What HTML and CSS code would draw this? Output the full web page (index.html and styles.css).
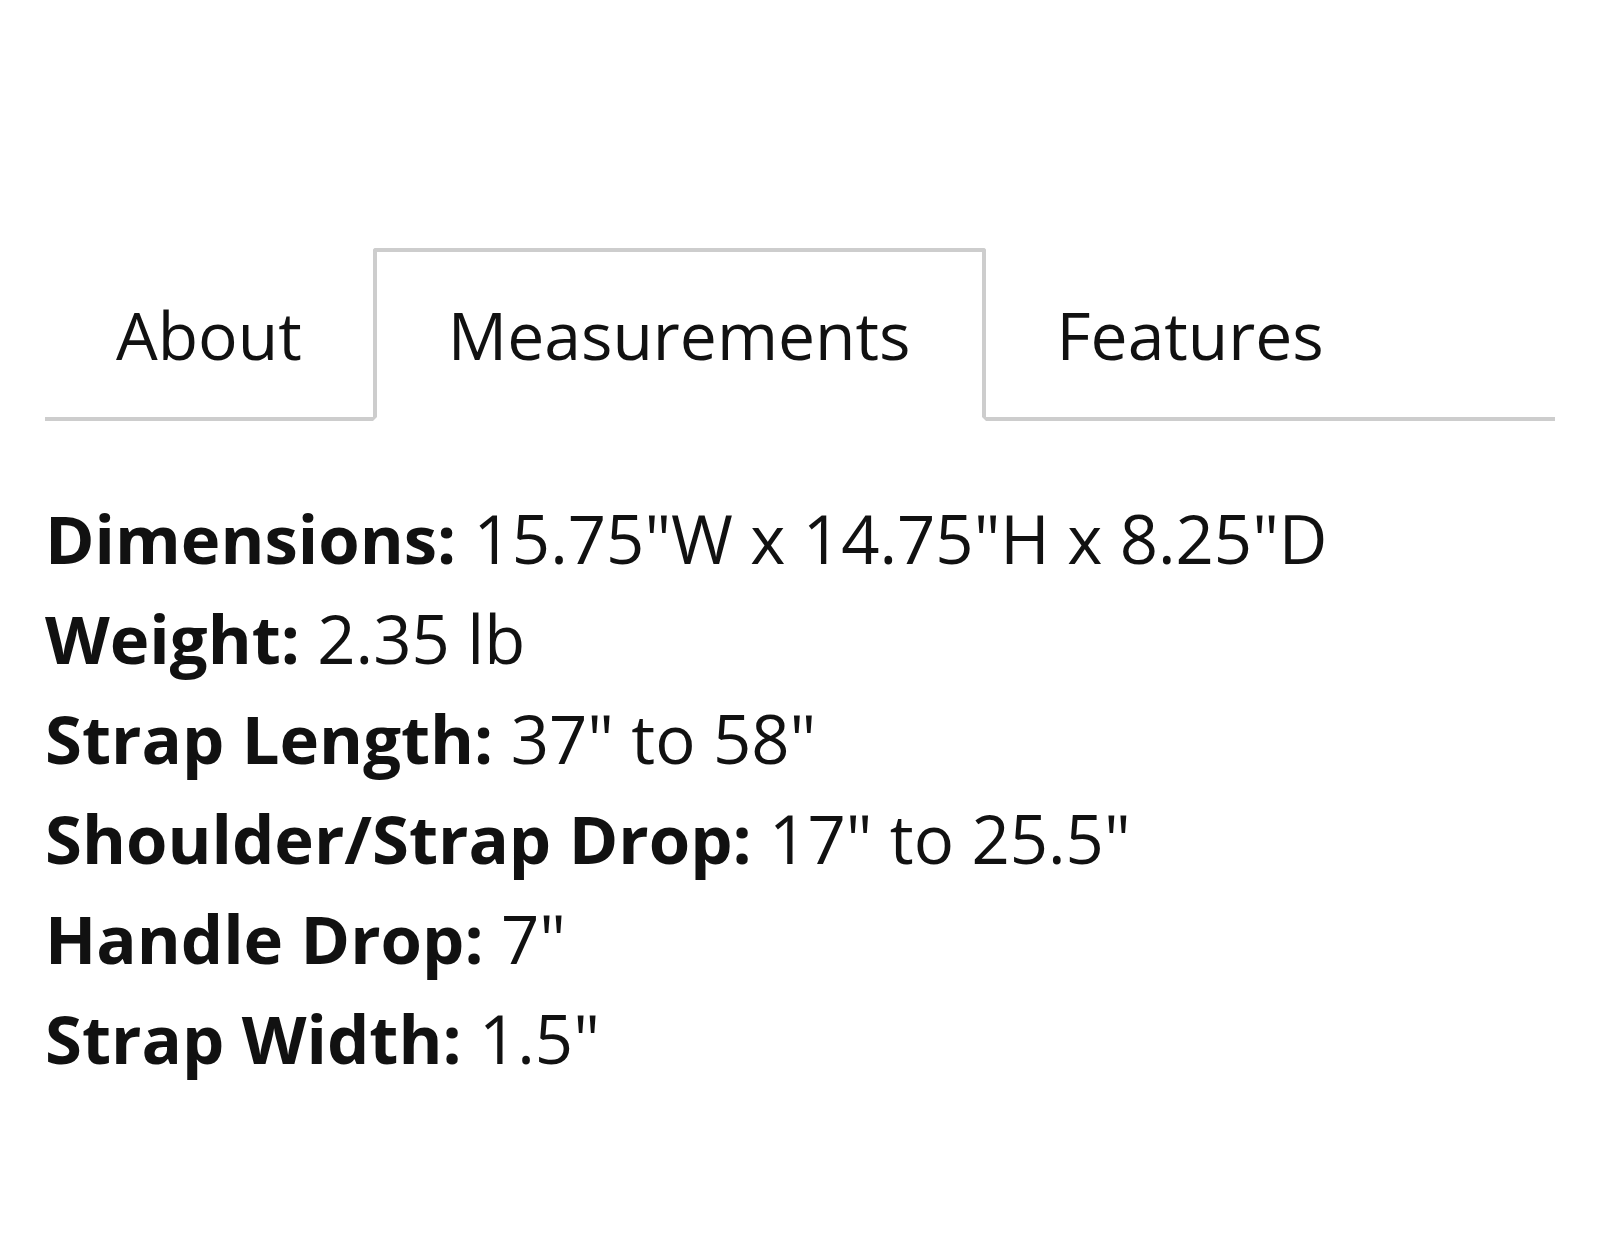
FILE: index.html
```html
<!DOCTYPE html>
<html lang="en">
<head>
<meta charset="utf-8">
<title>Measurements</title>
<link rel="stylesheet" href="styles.css">
</head>
<body>
<div class="page">
  <div class="tabs">
    <div class="tab">About</div>
    <div class="tab active">Measurements</div>
    <div class="tab">Features</div>
    <div class="tab-fill"></div>
  </div>
  <div class="panel">
    <p class="row"><b>Dimensions:</b> 15.75"W x 14.75"H x 8.25"D</p>
    <p class="row"><b>Weight:</b> 2.35 lb</p>
    <p class="row"><b>Strap Length:</b> 37" to 58"</p>
    <p class="row"><b>Shoulder/Strap Drop:</b> 17" to 25.5"</p>
    <p class="row"><b>Handle Drop:</b> 7"</p>
    <p class="row"><b>Strap Width:</b> 1.5"</p>
  </div>
</div>
</body>
</html>
```
FILE: styles.css
```css
html, body {
  margin: 0;
  padding: 0;
  background: #fff;
}
body {
  font-family: "Open Sans", "Noto Sans", sans-serif;
  color: #111;
}
.page {
  padding: 248px 45px 0;
}
.tabs {
  display: flex;
  align-items: stretch;
}
.tab {
  font-size: 66px;
  line-height: 1;
  padding: 53px 71px 0;
  height: 173px;
  box-sizing: border-box;
  border: 0 solid transparent;
  border-bottom: 4px solid #cdcdcd;
}
.tab.active {
  padding-top: 49px;
  border: 4px solid #cdcdcd;
  border-bottom: 4px solid #fff;
  border-radius: 3px 3px 0 0;
}
.tab-fill {
  flex: 1;
  border-bottom: 4px solid #cdcdcd;
}
.panel {
  padding-top: 67px;
}
.row {
  margin: 0;
  font-size: 67px;
  line-height: 100px;
}
.row b {
  font-weight: 700;
}
```
